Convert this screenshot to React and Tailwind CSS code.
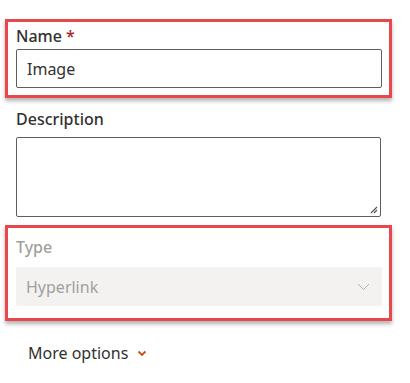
export default function App() {
  return (
    <div
      className="w-[410px] h-[383px] bg-white overflow-hidden pt-[19px] pl-[5px]"
      style={{ fontFamily: '"Segoe UI", "Noto Sans", sans-serif' }}
    >
      {/* Name field - highlighted */}
      <div className="w-[387px] border-[3px] border-[#e8484b] shadow-[0_3px_4px_rgba(0,0,0,0.3)] pl-[8px] pr-[7px] pt-[1px] pb-[7px]">
        <div className="h-[26px] text-[16px] leading-[26px] font-medium text-[#323130]">
          Name <span className="text-[#a4262c]">*</span>
        </div>
        <div className="h-[39px] border border-[#605e5c] rounded-[2px] px-[10px] flex items-center text-[16px] text-[#323130]">
          Image
        </div>
      </div>

      {/* Description */}
      <div className="pl-[11px] pr-[10px] pt-[9px]">
        <div className="h-[30px] text-[16px] leading-[24px] font-medium text-[#323130]">Description</div>
        <div className="relative h-[80px] w-[365px] border border-[#605e5c] rounded-[2px]">
          <svg className="absolute right-[2px] bottom-[2px]" width="9" height="9" viewBox="0 0 9 9">
            <path d="M8 2L2 8M8 5L5 8" stroke="#555" strokeWidth="1.2" />
          </svg>
        </div>
      </div>

      {/* Type field - highlighted */}
      <div className="mt-[8px] w-[387px] border-[3px] border-[#e8484b] shadow-[0_3px_4px_rgba(0,0,0,0.3)] pl-[8px] pr-[7px] pt-[6px] pb-[12px]">
        <div className="h-[33px] text-[16px] leading-[26px] font-medium text-[#a19f9d]">Type</div>
        <div className="h-[39px] bg-[#f3f2f1] rounded-[2px] pl-[10px] pr-[12px] flex items-center justify-between text-[16px] text-[#a19f9d]">
          <span>Hyperlink</span>
          <svg width="13" height="8" viewBox="0 0 13 8">
            <path d="M1 1L6.5 6.5L12 1" fill="none" stroke="#b3b0ad" strokeWidth="1" />
          </svg>
        </div>
      </div>

      {/* More options */}
      <div className="pl-[23px] pt-[20px] flex items-center gap-[9px] text-[16px] text-[#323130]">
        <span>More options</span>
        <svg width="10" height="7" viewBox="0 0 10 7">
          <path d="M1.5 1.5L5 5L8.5 1.5" fill="none" stroke="#ca5010" strokeWidth="1.8" />
        </svg>
      </div>
    </div>
  );
}
